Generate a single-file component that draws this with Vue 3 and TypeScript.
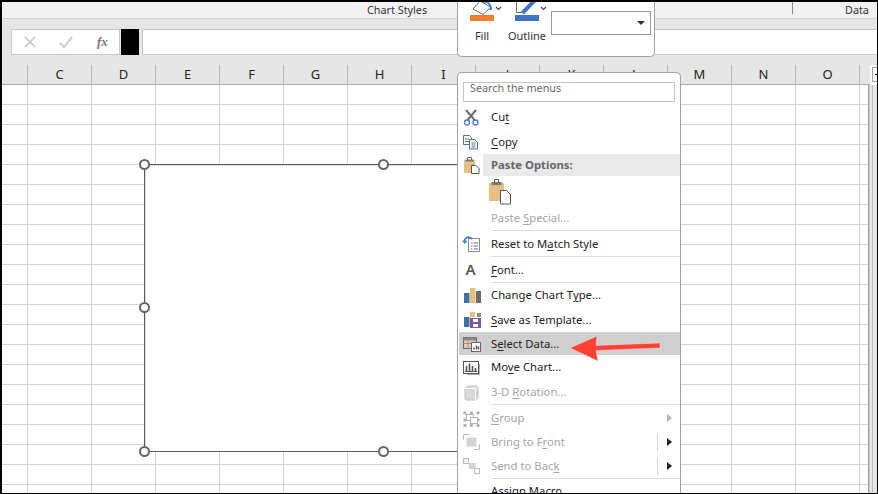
<script setup lang="ts">
interface Item {
  key: string
  pre: string
  u: string
  post: string
  h: number
  icon?: string
  off?: boolean
  hl?: boolean
  sub?: 'plain' | 'split'
  sepAfter?: boolean
}

const columns = ['C', 'D', 'E', 'F', 'G', 'H', 'I', 'J', 'K', 'L', 'M', 'N', 'O', '']
const cellCount = 21 * 15

const firstItems: Item[] = [
  { key: 'cut', pre: 'Cu', u: 't', post: '', h: 24, icon: 'cut' },
  { key: 'copy', pre: '', u: 'C', post: 'opy', h: 25, icon: 'copy' }
]

const items: Item[] = [
  { key: 'special', pre: 'Paste ', u: 'S', post: 'pecial...', h: 25, off: true, sepAfter: true },
  { key: 'reset', pre: 'Reset to M', u: 'a', post: 'tch Style', h: 25, icon: 'reset', sepAfter: true },
  { key: 'font', pre: '', u: 'F', post: 'ont...', h: 25, icon: 'font', sepAfter: true },
  { key: 'type', pre: 'Change Chart T', u: 'y', post: 'pe...', h: 24, icon: 'type' },
  { key: 'save', pre: '', u: 'S', post: 'ave as Template...', h: 25, icon: 'save' },
  { key: 'data', pre: 'S', u: 'e', post: 'lect Data...', h: 23, icon: 'data', hl: true },
  { key: 'move', pre: 'Mo', u: 'v', post: 'e Chart...', h: 24, icon: 'move' },
  { key: 'rot', pre: '3-D ', u: 'R', post: 'otation...', h: 25, icon: 'rot', off: true, sepAfter: true },
  { key: 'group', pre: '', u: 'G', post: 'roup', h: 25, icon: 'group', off: true, sub: 'plain' },
  { key: 'front', pre: 'Bring to F', u: 'r', post: 'ont', h: 24, icon: 'front', off: true, sub: 'split' },
  { key: 'back', pre: 'Send to Bac', u: 'k', post: '', h: 24, icon: 'back', off: true, sub: 'split', sepAfter: true },
  { key: 'macro', pre: 'Assig', u: 'n', post: ' Macro...', h: 24 }
]
</script>

<template>
  <div class="screen">
    <div class="frame">
      <div class="ribbon">
        <span class="ribbon-title styles">Chart Styles</span>
        <span class="ribbon-divider"></span>
        <span class="ribbon-title data">Data</span>
      </div>

      <div class="formula-bar">
        <div class="formula-tools">
          <svg width="20" height="20" viewBox="0 0 20 20" class="tool-x">
            <path d="M5 5l10 10M15 5L5 15" stroke="#c6c6c6" stroke-width="1.7" fill="none" />
          </svg>
          <svg width="20" height="20" viewBox="0 0 20 20" class="tool-check">
            <path d="M4 11l4 4 8-10" stroke="#d0d0d0" stroke-width="2.4" fill="none" />
          </svg>
          <span class="fx">fx</span>
        </div>
        <div class="name-black"></div>
        <div class="formula-input"></div>
      </div>

      <div class="col-header">
        <div class="corner"></div>
        <div v-for="c in columns" :key="c" class="col-cell">{{ c }}</div>
      </div>

      <div class="sheet">
        <div class="grid">
          <div v-for="n in cellCount" :key="n" class="cell"></div>
        </div>
        <div class="vscroll"><div class="vscroll-track"></div></div>
      </div>

      <div class="scroll-up"><span></span></div>

      <div class="chart">
        <span class="handle tl"></span>
        <span class="handle tc"></span>
        <span class="handle ml"></span>
        <span class="handle bl"></span>
        <span class="handle bc"></span>
      </div>

      <div class="mini-toolbar">
        <div class="mini-btn">
          <svg width="36" height="19" viewBox="0 0 36 19" class="mini-icon">
            <path d="M3 7L10 -1L21 5L13 12.500z" fill="#fff" stroke="#6b6b6b" stroke-width="1" />
            <path d="M13 0c5 -1 8 2 8 8" stroke="#3f86c8" stroke-width="2" fill="none" />
            <rect x="0" y="13" width="24" height="6" fill="#ed7d31" />
            <path d="M26 5l2.500 2.500L31 5" stroke="#444" stroke-width="1.100" fill="none" />
          </svg>
          <span>Fill</span>
        </div>
        <div class="mini-btn">
          <svg width="36" height="19" viewBox="0 0 36 19" class="mini-icon">
            <path d="M1.500 -1v11.500H7" stroke="#6b6b6b" stroke-width="1" fill="none" />
            <path d="M7.500 11L20 -2" stroke="#3f76c4" stroke-width="4" fill="none" />
            <rect x="0" y="13" width="24" height="6" fill="#4472c4" />
            <path d="M26 5l2.500 2.500L31 5" stroke="#444" stroke-width="1.100" fill="none" />
          </svg>
          <span>Outline</span>
        </div>
        <div class="combo"><i></i></div>
      </div>

      <div class="menu">
        <div class="search"><span>Search the menus</span></div>

        <div v-for="it in firstItems" :key="it.key" class="row" :style="{ height: it.h + 'px' }">
          <div class="icon-slot">
            <svg width="20" height="20" viewBox="0 0 20 20">
              <template v-if="it.icon === 'cut'">
                <path d="M4 3l8.500 10M14 3L5.500 13" stroke="#6e6e6e" stroke-width="2" fill="none" />
                <circle cx="5" cy="15.500" r="2.500" stroke="#4a7ebb" stroke-width="1.300" fill="none" />
                <circle cx="13.500" cy="15.500" r="2.500" stroke="#4a7ebb" stroke-width="1.300" fill="none" />
              </template>
              <template v-else>
                <path d="M1.500 3.500h6l2 2v7h-8z" fill="#fff" stroke="#6b6b6b" />
                <path d="M3 7h4M3 9.500h4" stroke="#3f76c4" />
                <path d="M7.500 7.500h5l3 3v6.500h-8z" fill="#fff" stroke="#6b6b6b" />
                <path d="M9.500 11h4M9.500 13h4M9.500 15h4" stroke="#3f76c4" />
              </template>
            </svg>
          </div>
          <div class="label"><span>{{ it.pre }}<u>{{ it.u }}</u>{{ it.post }}</span></div>
        </div>

        <div class="row paste-head">
          <div class="icon-slot">
            <svg width="20" height="20" viewBox="0 0 20 20">
              <rect x="2" y="5" width="11" height="13" fill="#e8bf82" />
              <path d="M5.500 5V2.500h4V5" fill="#fff" stroke="#6b6b6b" />
              <rect x="3.500" y="4.500" width="8" height="2" fill="#7a7a7a" />
              <path d="M9.500 10.500h4.500l3 3v5h-7.500z" fill="#fff" stroke="#555" />
            </svg>
          </div>
          <div class="label head-label"><span>Paste Options:</span></div>
        </div>

        <div class="paste-big">
          <svg width="24" height="26" viewBox="0 0 24 26">
            <rect x="1" y="4" width="15" height="18" fill="#e8bf82" />
            <rect x="3.500" y="3" width="10" height="3" fill="#7a7a7a" />
            <rect x="6.500" y="0.500" width="4" height="3" fill="#fff" stroke="#6b6b6b" />
            <path d="M12.500 11.500h6l4 4v9.500h-10z" fill="#fff" stroke="#555" />
          </svg>
        </div>

        <template v-for="it in items" :key="it.key">
          <div class="row" :class="{ off: it.off, hl: it.hl }" :style="{ height: it.h + 'px' }">
            <div class="icon-slot">
              <svg v-if="it.icon" width="20" height="20" viewBox="0 0 20 20">
                <template v-if="it.icon === 'reset'">
                  <rect x="6.500" y="4.500" width="11" height="13" fill="#fff" stroke="#8a8a8a" />
                  <path d="M9 9h1.500M12 9h4M9 12h1.500M12 12h4M9 15h1.500M12 15h4" stroke="#666" />
                  <path d="M10 5C7 2 3 3 2.500 7.500" stroke="#3f86c8" stroke-width="1.800" fill="none" />
                  <path d="M0 6.500l2.500 3.500 3-3z" fill="#3f86c8" />
                </template>
                <text v-else-if="it.icon === 'font'" x="3.500" y="15" class="font-glyph">A</text>
                <template v-else-if="it.icon === 'type'">
                  <rect x="2" y="8" width="5.500" height="10" fill="#44709e" />
                  <rect x="8" y="3" width="5.500" height="15" fill="#e8bf82" />
                  <rect x="14" y="6" width="5" height="12" fill="#6b6b6b" />
                </template>
                <template v-else-if="it.icon === 'save'">
                  <rect x="8" y="2" width="5" height="5" fill="#e8bf82" />
                  <rect x="15" y="3" width="4" height="4" fill="#8a8a8a" />
                  <rect x="2" y="7" width="5.500" height="10" fill="#44709e" />
                  <rect x="8" y="8" width="11" height="10" fill="#7e57a6" />
                  <rect x="11" y="9" width="5" height="3" fill="#fff" />
                  <rect x="11" y="14" width="5" height="3" fill="#fff" />
                </template>
                <template v-else-if="it.icon === 'data'">
                  <rect x="1.500" y="3.500" width="13" height="11" fill="none" stroke="#666" />
                  <rect x="1.500" y="3.500" width="13" height="3" fill="#8a8a8a" />
                  <path d="M6 6.500v8M1.500 9.500h8" stroke="#ed7d31" />
                  <rect x="9.500" y="8.500" width="9" height="9" fill="#fff" stroke="#666" />
                  <path d="M12 15.500v-2M14.500 15.500v-4M16.500 15.500v-3" stroke="#555" stroke-width="1.500" />
                </template>
                <template v-else-if="it.icon === 'move'">
                  <rect x="1.500" y="4.500" width="15" height="12" fill="#fff" stroke="#555" />
                  <path d="M4.500 14V9M7.500 14V6.500M10.500 14V9M13.500 14v-3" stroke="#555" stroke-width="1.600" />
                  <path d="M3 14.500h12" stroke="#555" />
                  <path d="M17.500 7v10.500H5" stroke="#b0b0b0" fill="none" />
                </template>
                <template v-else-if="it.icon === 'rot'">
                  <path d="M3 6.500L6 4h9l1 1v11l-2 2H4l-1-1z" fill="#d9d9d9" stroke="#c2c2c2" />
                  <path d="M3 6.500h10.500V18M13.500 6.500L16 4.500" fill="none" stroke="#fff" />
                </template>
                <template v-else-if="it.icon === 'group'">
                  <path d="M1.500 3.500h3v3h-3zM8 3.500h3v3H8zM14.500 3.500h3v3h-3zM1.500 10.500h3v3h-3zM14.500 10.500h3v3h-3zM1.500 16h3v3h-3zM8 16h3v3H8zM14.500 16h3v3h-3z" fill="#b5b5b5" />
                  <rect x="4.500" y="6.500" width="7" height="6" fill="none" stroke="#b5b5b5" />
                  <rect x="8.500" y="9.500" width="7" height="6" fill="#fff" stroke="#b5b5b5" />
                </template>
                <template v-else-if="it.icon === 'front'">
                  <path d="M1.500 8V2.500h6M11.500 17.500h6V12" fill="none" stroke="#bdbdbd" />
                  <rect x="4.500" y="5.500" width="10" height="9" fill="#d4d4d4" />
                </template>
                <template v-else-if="it.icon === 'back'">
                  <rect x="1.500" y="2.500" width="5" height="5" fill="#fff" stroke="#bdbdbd" />
                  <rect x="6.500" y="7" width="7" height="6" fill="#d4d4d4" />
                  <rect x="12.500" y="12.500" width="5" height="5" fill="#fff" stroke="#bdbdbd" />
                </template>
              </svg>
            </div>
            <div class="label">
              <span>{{ it.pre }}<u>{{ it.u }}</u>{{ it.post }}</span>
              <i v-if="it.sub === 'split'" class="split"></i>
              <i v-if="it.sub" class="caret" :class="{ dim: it.sub === 'plain' }"></i>
            </div>
          </div>
          <div v-if="it.sepAfter" class="sep"></div>
        </template>
      </div>

      <svg class="arrow" width="100" height="30" viewBox="0 0 100 30">
        <path d="M2 15L29 3l-1 9.500 64-2.500 0 5-64 2.500 2 10.500z" fill="#ff4136" stroke="#fff" stroke-opacity="0.35" stroke-width="1" />
      </svg>
    </div>
  </div>
</template>

<style>
html,
body {
  margin: 0;
  background: #000;
}
</style>

<style scoped>
.screen {
  width: 878px;
  height: 494px;
  box-sizing: border-box;
  padding: 2px 1px 1px 2px;
  background: #000;
  font-family: "Noto Sans", "Open Sans", sans-serif;
  color: #222;
}
.frame {
  position: relative;
  width: 875px;
  height: 491px;
  overflow: hidden;
  background: #fff;
  display: flex;
  flex-direction: column;
}
.ribbon {
  height: 17px;
  flex: none;
  box-sizing: border-box;
  background: #f2f2f2;
  border-bottom: 1px solid #d4d4d4;
  display: flex;
  font-size: 10.8px;
  line-height: 16px;
  color: #333;
}
.ribbon-title.styles {
  margin-left: 365px;
  width: 425px;
}
.ribbon-divider {
  width: 1px;
  height: 12px;
  background: #8a8a8a;
}
.ribbon-title.data {
  margin-left: 52px;
}
.formula-bar {
  height: 46px;
  flex: none;
  box-sizing: border-box;
  background: #e6e6e6;
  padding: 10px 0 10px 9px;
  display: flex;
}
.formula-tools {
  width: 109px;
  box-sizing: border-box;
  background: #fff;
  border: 1px solid #c8c8c8;
  display: flex;
  align-items: center;
  position: relative;
}
.tool-x {
  margin-left: 8px;
}
.tool-check {
  margin-left: 16px;
}
.fx {
  margin-left: 21px;
  font-family: "Liberation Serif", serif;
  font-style: italic;
  font-weight: 700;
  font-size: 13px;
  color: #777;
}
.name-black {
  width: 18px;
  margin-left: 1px;
  background: #000;
}
.formula-input {
  flex: 1;
  margin-left: 3px;
  background: #fff;
  border: 1px solid #c8c8c8;
  border-right: none;
}
.col-header {
  height: 20px;
  flex: none;
  box-sizing: border-box;
  display: flex;
  background: #e6e6e6;
  border-bottom: 1px solid #ababab;
  margin-right: 7px;
}
.corner {
  width: 26px;
  box-sizing: border-box;
  border-right: 1px solid #b4b4b4;
}
.col-cell {
  width: 64px;
  box-sizing: border-box;
  border-right: 1px solid #b4b4b4;
  text-align: center;
  font-size: 13px;
  line-height: 19px;
  color: #222;
}
.col-cell:last-child {
  border-right: none;
  width: 8px;
}
.sheet {
  flex: 1;
  display: flex;
  min-height: 0;
  overflow: hidden;
}
.grid {
  width: 867px;
  flex: none;
  box-sizing: border-box;
  border-right: 1px solid #9e9e9e;
  display: grid;
  grid-template-columns: 26px repeat(13, 64px) 8px;
  grid-auto-rows: 20px;
  overflow: hidden;
}
.cell {
  box-sizing: border-box;
  border-right: 1px solid #d4d4d4;
  border-bottom: 1px solid #d4d4d4;
}
.cell:nth-child(15n) {
  border-right: none;
}
.vscroll {
  flex: 1;
  background: #e6e6e6;
  padding-left: 3px;
  border-left: 1px solid #c8c8c8;
}
.vscroll-track {
  height: 100%;
  margin-left: -1px;
  border-left: 1px solid #bdbdbd;
}
.scroll-up {
  position: absolute;
  left: 870px;
  top: 65px;
  width: 5px;
  height: 15px;
  box-sizing: border-box;
  background: #fff;
  border: 1px solid #a6a6a6;
  border-right: none;
}
.scroll-up span {
  position: absolute;
  right: 0;
  top: 6px;
  width: 2px;
  height: 1px;
  background: #222;
}
.chart {
  position: absolute;
  left: 142px;
  top: 162px;
  width: 520px;
  height: 288px;
  box-sizing: border-box;
  background: #fff;
  border: 1px solid #5c5c5c;
  box-shadow: inset 1px 1px 0 rgba(0, 0, 0, 0.14);
}
.handle {
  position: absolute;
  width: 11px;
  height: 11px;
  box-sizing: border-box;
  background: #fff;
  border: 2px solid #666;
  border-radius: 50%;
}
.tl {
  left: -6px;
  top: -6px;
}
.tc {
  left: 233px;
  top: -6px;
}
.ml {
  left: -6px;
  top: 137px;
}
.bl {
  left: -6px;
  bottom: -6px;
}
.bc {
  left: 233px;
  bottom: -6px;
}
.mini-toolbar {
  position: absolute;
  left: 455px;
  top: 0;
  width: 198px;
  height: 55px;
  box-sizing: border-box;
  background: #fff;
  border: 1px solid #a0a0a0;
  border-top: none;
  border-radius: 0 0 5px 5px;
  display: flex;
  padding-left: 12px;
  font-size: 11px;
  color: #333;
}
.mini-btn {
  width: 45px;
  display: flex;
  flex-direction: column;
}
.mini-btn span {
  margin-top: 7px;
  line-height: 16px;
  width: 24px;
  display: flex;
  justify-content: center;
  white-space: nowrap;
}
.mini-icon {
  display: block;
  overflow: visible;
}
.combo {
  width: 100px;
  height: 24px;
  margin-top: 9px;
  margin-left: -9px;
  box-sizing: border-box;
  border: 1px solid #9a9a9a;
  position: relative;
}
.combo i {
  position: absolute;
  right: 5px;
  top: 9px;
  border-left: 4px solid transparent;
  border-right: 4px solid transparent;
  border-top: 4px solid #333;
}
.menu {
  position: absolute;
  left: 455px;
  top: 70px;
  width: 224px;
  box-sizing: border-box;
  background: #fff;
  border: 1px solid #a0a0a0;
  border-bottom: none;
  border-radius: 5px 5px 0 0;
  font-size: 11.3px;
  color: #222;
  padding-top: 9px;
}
.search {
  margin: 0 5px 3px 5px;
  height: 20px;
  box-sizing: border-box;
  border: 1px solid #c6c6c6;
  padding-left: 6px;
  line-height: 9px;
  font-size: 10.8px;
  color: #6a6a6a;
}
.search span {
  display: block;
  padding-top: 1px;
  margin-top: -1px;
}
.row {
  display: flex;
  align-items: center;
}
.icon-slot {
  width: 25px;
  flex: none;
  box-sizing: border-box;
  padding-left: 4px;
  display: flex;
  align-items: center;
}
.icon-slot svg {
  display: block;
}
.label {
  flex: 1;
  display: flex;
  align-items: center;
  box-sizing: border-box;
  padding-left: 8px;
  padding-bottom: 1px;
  height: 100%;
  position: relative;
}
.off {
  color: #a6a6a6;
}
.hl {
  background: #cfcfcf;
  margin-left: 1px;
}
.hl .icon-slot {
  width: 24px;
  padding-left: 3px;
}
.paste-head {
  height: 22px;
}
.head-label {
  background: #e9e9e9;
  font-weight: 700;
  color: #666;
}
.paste-big {
  height: 29px;
  box-sizing: border-box;
  padding: 3px 0 0 30px;
}
.paste-big svg {
  display: block;
}
.sep {
  height: 1px;
  margin-left: 33px;
  background: #e1e1e1;
}
.split {
  position: absolute;
  right: 22px;
  top: 3px;
  bottom: 3px;
  width: 1px;
  background: #d9d9d9;
}
.caret {
  position: absolute;
  right: 8px;
  top: 50%;
  margin-top: -4px;
  border-top: 4px solid transparent;
  border-bottom: 4px solid transparent;
  border-left: 5px solid #222;
}
.caret.dim {
  border-left-color: #b5b5b5;
}
.font-glyph {
  font-family: "Noto Sans", sans-serif;
  font-size: 15px;
  font-weight: 600;
  fill: #5a5a5a;
}
.arrow {
  position: absolute;
  left: 566px;
  top: 331px;
}
u {
  text-underline-offset: 2px;
}
</style>
